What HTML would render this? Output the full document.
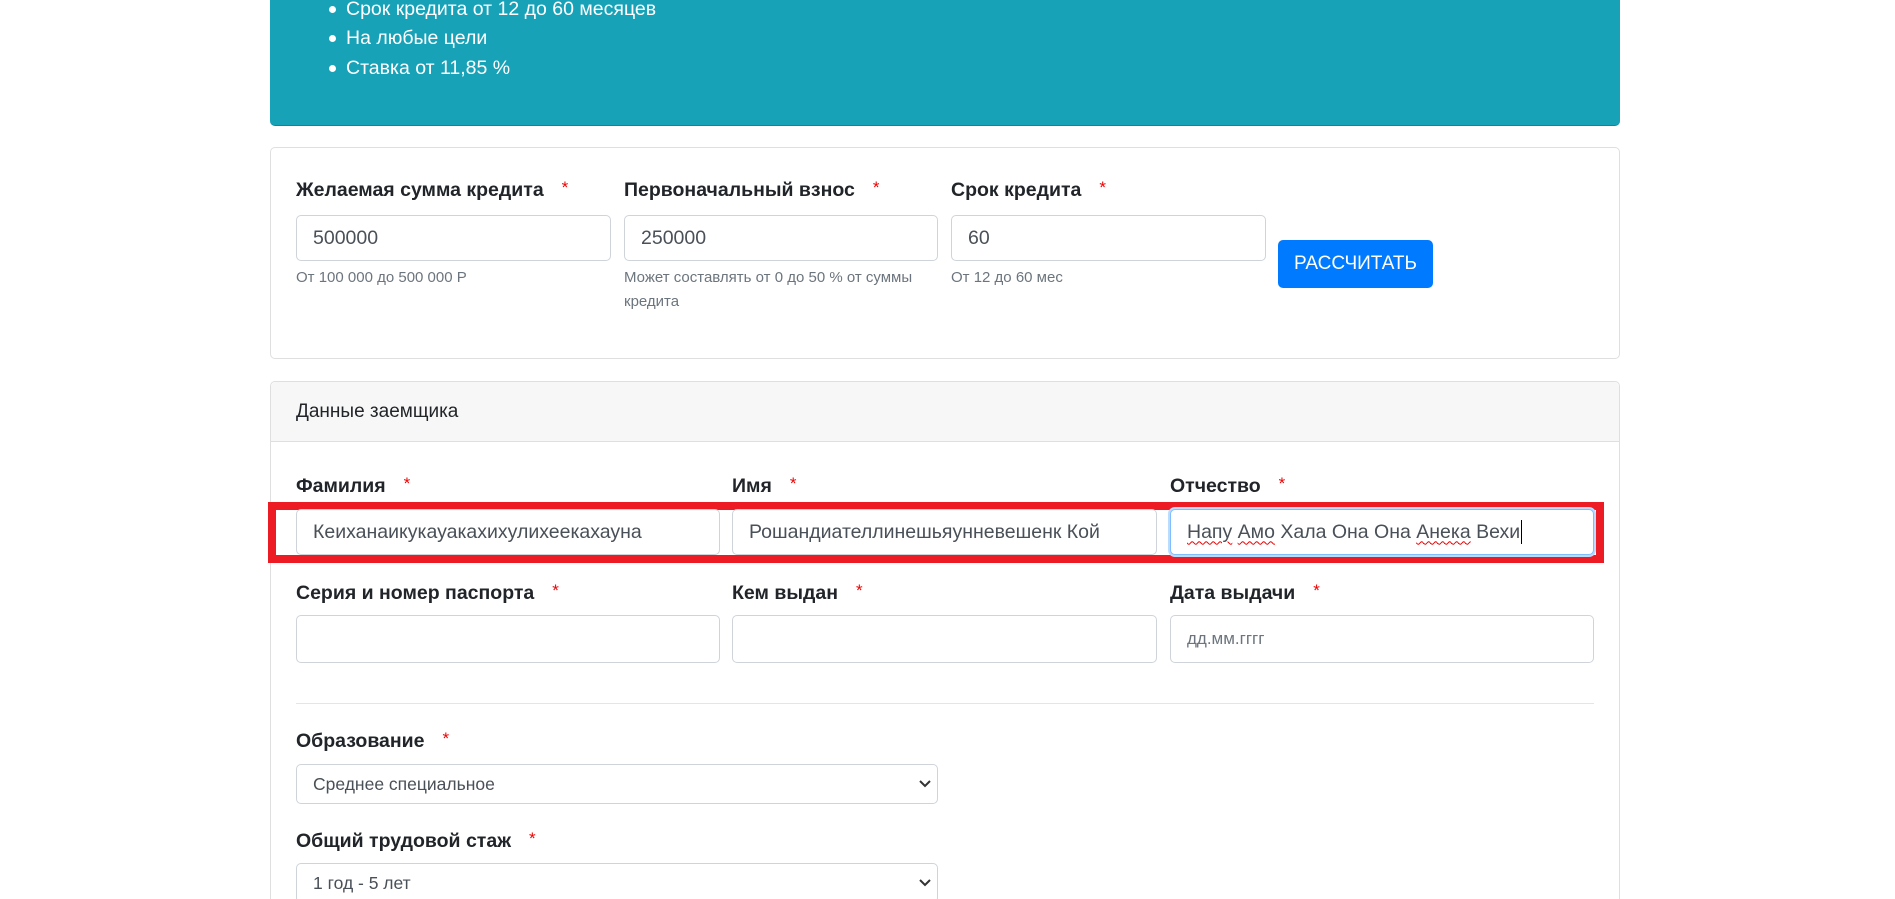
<!DOCTYPE html>
<html><head><meta charset="utf-8"><style>
*{box-sizing:border-box;margin:0;padding:0}
html{width:1895px;height:899px;overflow:hidden}
body{width:1895px;height:899px;overflow:hidden;background:#fff;font-family:"Liberation Sans",sans-serif;color:#212529;position:relative}
.a{position:absolute}
.teal{left:270px;top:-10px;width:1350px;height:136px;background:#17a2b8;border-radius:0 0 5px 5px;border-bottom:1px solid #138496}
.teal li{position:absolute;left:76px;color:#fff;font-size:19.5px;list-style:none}
.teal li:before{content:"";position:absolute;left:-17px;top:8px;width:7px;height:7px;border-radius:50%;background:#fff}
.card{border:1px solid #dfdfdf;border-radius:5px;background:#fff}
.lbl{font-weight:bold;font-size:19.5px;color:#212529;white-space:nowrap}
.lbl b{color:#e00;font-weight:normal;margin-left:18px;font-size:17px;vertical-align:3px}
.inp{border:1px solid #ced4da;border-radius:5px;background:#fff;font-size:19.5px;color:#495057;padding-left:16px;display:flex;align-items:center;white-space:nowrap;overflow:hidden}
.help{font-size:15px;color:#6c757d;line-height:24px}
.sel{font-size:17.5px}
.u{text-decoration:underline wavy #e00;text-decoration-thickness:1px;text-underline-offset:3px}
</style></head><body>
<div class="a teal"><ul>
<li style="top:8px">Срок кредита от 12 до 60 месяцев</li>
<li style="top:37px">На любые цели</li>
<li style="top:67px">Ставка от 11,85 %</li></ul></div>

<div class="a card" style="left:270px;top:147px;width:1350px;height:212px"></div>
<div class="a lbl" style="left:296px;top:178px">Желаемая сумма кредита<b>*</b></div>
<div class="a lbl" style="left:624px;top:178px">Первоначальный взнос<b>*</b></div>
<div class="a lbl" style="left:951px;top:178px">Срок кредита<b>*</b></div>
<div class="a inp" style="left:296px;top:215px;width:315px;height:46px">500000</div>
<div class="a inp" style="left:624px;top:215px;width:314px;height:46px">250000</div>
<div class="a inp" style="left:951px;top:215px;width:315px;height:46px">60</div>
<div class="a help" style="left:296px;top:266px">От 100 000 до 500 000 Р</div>
<div class="a help" style="left:624px;top:266px;width:310px">Может составлять от 0 до 50 % от суммы кредита</div>
<div class="a help" style="left:951px;top:266px">От 12 до 60 мес</div>
<div class="a" style="left:1278px;top:240px;width:155px;height:48px;background:#007bff;border-radius:5px;color:#fff;font-size:19px;display:flex;align-items:center;justify-content:center">РАССЧИТАТЬ</div>

<div class="a card" style="left:270px;top:381px;width:1350px;height:600px"></div>
<div class="a" style="left:271px;top:382px;width:1348px;height:60px;background:#f7f7f7;border-bottom:1px solid #dfdfdf;border-radius:5px 5px 0 0"></div>
<div class="a" style="left:296px;top:401px;font-size:19px">Данные заемщика</div>

<div class="a lbl" style="left:296px;top:474px">Фамилия<b>*</b></div>
<div class="a lbl" style="left:732px;top:474px">Имя<b>*</b></div>
<div class="a lbl" style="left:1170px;top:474px">Отчество<b>*</b></div>
<div class="a" style="left:268px;top:502px;width:1336px;height:61px;border:8px solid #ed1c24"></div>
<div class="a inp" style="left:296px;top:509px;width:424px;height:46px">Кеиханаикукауакахихулихеекахауна</div>
<div class="a inp" style="left:732px;top:509px;width:425px;height:46px">Рошандиателлинешьяунневешенк Кой</div>
<div class="a inp" style="left:1170px;top:509px;width:424px;height:46px;border-color:#80bdff;box-shadow:0 0 0 2px #bcdcff"><span class="u">Напу</span>&nbsp;<span class="u">Амо</span>&nbsp;Хала Она Она&nbsp;<span class="u">Анека</span>&nbsp;Вехи<span style="border-left:1px solid #000;height:24px;margin-left:1px"></span></div>

<div class="a lbl" style="left:296px;top:581px">Серия и номер паспорта<b>*</b></div>
<div class="a lbl" style="left:732px;top:581px">Кем выдан<b>*</b></div>
<div class="a lbl" style="left:1170px;top:581px">Дата выдачи<b>*</b></div>
<div class="a inp" style="left:296px;top:615px;width:424px;height:48px"></div>
<div class="a inp" style="left:732px;top:615px;width:425px;height:48px"></div>
<div class="a inp" style="left:1170px;top:615px;width:424px;height:48px;font-size:17px;color:#6c757d">дд.мм.гггг</div>

<div class="a" style="left:296px;top:703px;width:1298px;height:1px;background:#e5e5e5"></div>

<div class="a lbl" style="left:296px;top:729px">Образование<b>*</b></div>
<div class="a inp sel" style="left:296px;top:764px;width:642px;height:40px">Среднее специальное</div>
<div class="a lbl" style="left:296px;top:829px">Общий трудовой стаж<b>*</b></div>
<div class="a inp sel" style="left:296px;top:863px;width:642px;height:40px">1 год - 5 лет</div>
<svg class="a" style="left:918px;top:779px" width="14" height="10"><path d="M2 2l5 5 5-5" stroke="#333" stroke-width="2" fill="none"/></svg>
<svg class="a" style="left:918px;top:878px" width="14" height="10"><path d="M2 2l5 5 5-5" stroke="#333" stroke-width="2" fill="none"/></svg>
</body></html>
